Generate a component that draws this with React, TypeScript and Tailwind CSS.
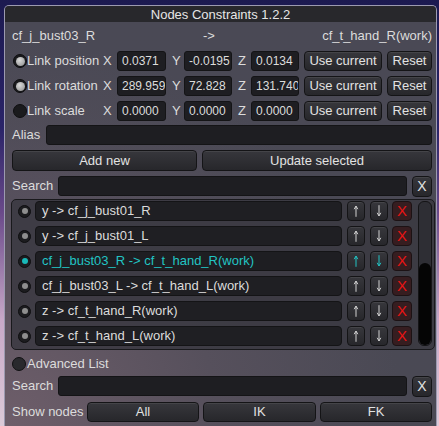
import React from "react";

const btn =
  "flex items-center justify-center rounded-[4px] border border-[#141416] bg-[linear-gradient(#37373c,#27272b)] shadow-[inset_0_1px_0_rgba(255,255,255,0.07)] text-[13px] text-[#e2e2e2]";
const field =
  "flex items-center overflow-hidden whitespace-nowrap rounded-[3px] border border-[#141416] bg-[#1e1e22]";

const items = [
  "y -> cf_j_bust01_R",
  "y -> cf_j_bust01_L",
  "cf_j_bust03_R -> cf_t_hand_R(work)",
  "cf_j_bust03_L -> cf_t_hand_L(work)",
  "z -> cf_t_hand_R(work)",
  "z -> cf_t_hand_L(work)",
];

function Radio({ on }: { on: boolean }) {
  return (
    <div className="ml-[1px] flex h-[14px] w-[14px] shrink-0 items-center justify-center rounded-full border border-[#0e0e10] bg-[#1a1a1d]">
      {on && <div className="h-[9px] w-[9px] rounded-full bg-[radial-gradient(circle_at_40%_35%,#dadada,#8a8a8a)]" />}
    </div>
  );
}

function Arrow({ up, color }: { up: boolean; color: string }) {
  return (
    <svg width="8" height="14" viewBox="0 0 8 14" className={up ? "" : "rotate-180"}>
      <path d="M4 2.2V12.8M2.2 5.2L4 2 5.8 5.2" fill="none" stroke={color} strokeWidth="1" />
    </svg>
  );
}

function LinkRow({ label, on, x, y, z }: { label: string; on: boolean; x: string; y: string; z: string }) {
  return (
    <div className="flex h-[20px] items-center">
      <div className="flex w-[88px] items-center">
        <Radio on={on} />
        <span>{label}</span>
      </div>
      <span className="w-[17px] pl-[3px]">X</span>
      <div className={`${field} h-[20px] w-[49px] pl-[4px] text-[12px]`}>{x}</div>
      <span className="w-[18px] pl-[6px]">Y</span>
      <div className={`${field} h-[20px] w-[48px] pl-[4px] text-[12px]`}>{y}</div>
      <span className="w-[19px] pl-[6px]">Z</span>
      <div className={`${field} h-[20px] w-[48px] pl-[4px] text-[12px]`}>{z}</div>
      <div className={`${btn} ml-[5px] h-[20px] w-[78px]`}>Use current</div>
      <div className={`${btn} ml-[5px] h-[20px] w-[45px]`}>Reset</div>
    </div>
  );
}

function SearchRow() {
  return (
    <div className="flex h-[20px] items-center">
      <span className="w-[46px]">Search</span>
      <div className={`${field} h-[20px] flex-1`} />
      <div className={`${btn} ml-[5px] h-[21px] w-[20px] text-[14px]`}>X</div>
    </div>
  );
}

export default function App() {
  return (
    <div className="h-[426px] w-[439px] overflow-hidden bg-[linear-gradient(#1c1a50,#2a2468_30%,#6a4a8a_50%,#c8a8c8_75%,#dccad8)] pt-[5px] pl-[4px] font-['Liberation_Sans',Arial,sans-serif] text-[13px] text-[#dcdcdc]">
      <div className="h-[421px] w-[433px] overflow-hidden rounded-t-[5px] border-x border-t border-[#9c9ab0] bg-[radial-gradient(ellipse_at_0%_100%,#6e5e6a,#56505c_35%,transparent_65%),radial-gradient(ellipse_at_0%_55%,#5e5066,transparent_30%),linear-gradient(#4a4955,#4a4954)]">
        <div className="flex h-[16px] items-center justify-center bg-[#28282c] pt-[1px] leading-none text-[#e6e6e6]">
          Nodes Constraints 1.2.2
        </div>
        <div className="pl-[7px] pr-[4px]">
          <div className="mt-[4px] flex h-[20px] items-center">
            <span className="w-[191px]">cf_j_bust03_R</span>
            <span>-&gt;</span>
            <span className="flex-1 text-right">cf_t_hand_R(work)</span>
          </div>
          <div className="mt-[5px] flex flex-col gap-[5px]">
            <LinkRow label="Link position" on x="0.0371" y="-0.0195" z="0.0134" />
            <LinkRow label="Link rotation" on x="289.959" y="72.828" z="131.740" />
            <LinkRow label="Link scale" on={false} x="0.0000" y="0.0000" z="0.0000" />
          </div>
          <div className="mt-[4px] flex h-[20px] items-center">
            <span className="w-[34px]">Alias</span>
            <div className={`${field} h-[20px] flex-1`} />
          </div>
          <div className="mt-[5px] flex h-[21px] gap-[5px]">
            <div className={`${btn} w-[185px]`}>Add new</div>
            <div className={`${btn} flex-1`}>Update selected</div>
          </div>
          <div className="mt-[5px]">
            <SearchRow />
          </div>
          <div className="-mr-[3px] -ml-[1px] mt-[3px] flex h-[151px] rounded-[5px] border border-[#19191c] bg-[#393841]/85 pt-[1px] pr-[2px] pb-[3px] pl-[6px]">
            <div className="flex flex-col gap-[5px]">
              {items.map((t, i) => {
                const sel = i === 2;
                return (
                  <div key={t} className="flex h-[20px] items-center">
                    <div className="flex h-[13px] w-[13px] items-center justify-center rounded-full border border-[#0e0e10] bg-[#1c1c1f]">
                      <div className={`h-[6px] w-[6px] rounded-full ${sel ? "bg-[#19b8b8]" : "bg-[#8e8e8e]"}`} />
                    </div>
                    <div
                      className={`${field} ml-[4px] h-[20px] w-[307px] rounded-[4px] pl-[6px] text-[13px] ${
                        sel ? "bg-[#1c2428] text-[#22c4c4]" : "bg-[#1f1f23] text-[#dcdcdc]"
                      }`}
                    >
                      {t}
                    </div>
                    <div className={`${btn} ml-[5px] h-[20px] w-[18px]`}>
                      <Arrow up color={sel ? "#22c4c4" : "#d2d2d2"} />
                    </div>
                    <div className={`${btn} ml-[5px] h-[20px] w-[18px]`}>
                      <Arrow up={false} color={sel ? "#22c4c4" : "#d2d2d2"} />
                    </div>
                    <div className="ml-[4px] flex h-[20px] w-[20px] items-center justify-center rounded-[4px] border border-[#1c1214] bg-[#361d20] text-[15px] text-[#e81414]">
                      X
                    </div>
                  </div>
                );
              })}
            </div>
            <div className="ml-[6px] flex h-[145px] w-[14px] flex-col overflow-hidden rounded-[6px] border border-[#141416] bg-[#2e2e34]">
              <div className="mt-auto h-[82px] rounded-[6px] bg-[#050505]" />
            </div>
          </div>
          <div className="mt-[5px] flex h-[18px] items-center">
            <div className="flex h-[14px] w-[14px] items-center justify-center rounded-full border border-[#101012] bg-[#29292d]" />
            <span className="ml-[1px]">Advanced List</span>
          </div>
          <div className="mt-[3px]">
            <SearchRow />
          </div>
          <div className="mt-[6px] flex h-[20px] items-center">
            <span className="w-[75px]">Show nodes</span>
            <div className={`${btn} h-[20px] w-[112px]`}>All</div>
            <div className={`${btn} ml-[4px] h-[20px] w-[113px]`}>IK</div>
            <div className={`${btn} ml-[4px] h-[20px] flex-1`}>FK</div>
          </div>
        </div>
      </div>
    </div>
  );
}
